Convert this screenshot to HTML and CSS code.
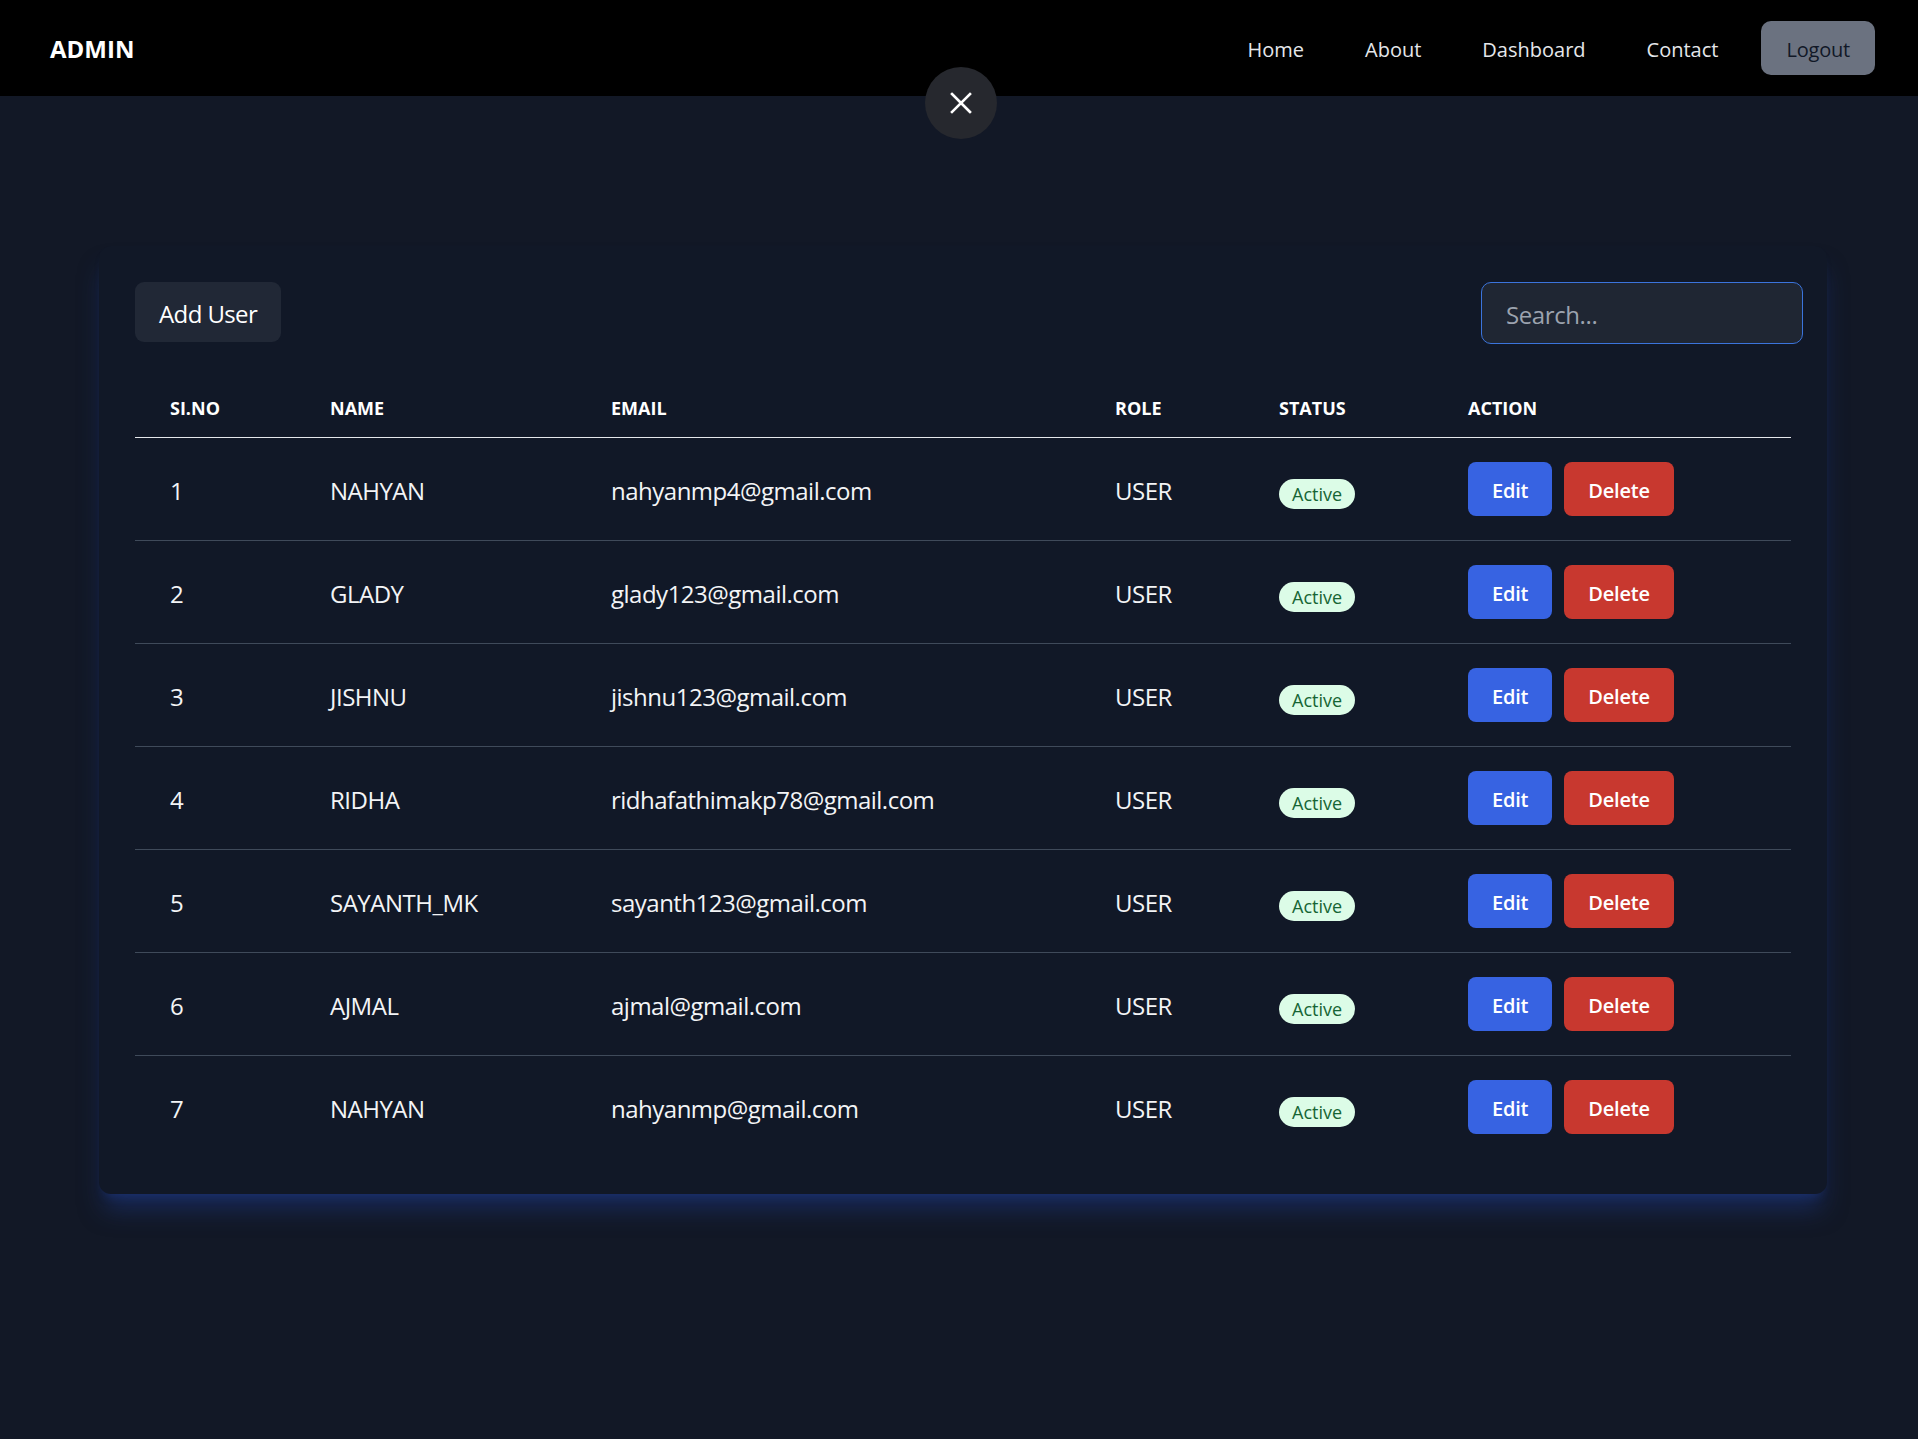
FILE: index.html
```html
<!DOCTYPE html>
<html lang="en">
<head>
<meta charset="utf-8">
<title>Admin - Users</title>
<link rel="stylesheet" href="styles.css">
</head>
<body>
<nav class="navbar">
  <div class="brand">ADMIN</div>
  <div class="nav-right">
    <ul class="nav-links">
      <li><a href="#">Home</a></li>
      <li><a href="#">About</a></li>
      <li><a href="#">Dashboard</a></li>
      <li><a href="#">Contact</a></li>
    </ul>
    <button class="logout">Logout</button>
  </div>
</nav>
<button class="close-btn" aria-label="Close">
  <svg width="22" height="22" viewBox="0 0 22 22"><path d="M2 2 L20 20 M20 2 L2 20" stroke="#fff" stroke-width="2.6" stroke-linecap="square" fill="none"/></svg>
</button>
<main class="page">
  <section class="card">
    <div class="toolbar">
      <button class="add-btn">Add User</button>
      <input class="search" type="text" placeholder="Search...">
    </div>
    <table class="users">
      <colgroup>
        <col class="c-no"><col class="c-name"><col class="c-email"><col class="c-role"><col class="c-status"><col class="c-action">
      </colgroup>
      <thead>
        <tr><th>SI.NO</th><th>NAME</th><th>EMAIL</th><th>ROLE</th><th>STATUS</th><th>ACTION</th></tr>
      </thead>
      <tbody>
        <tr><td>1</td><td>NAHYAN</td><td>nahyanmp4@gmail.com</td><td>USER</td><td><span class="badge">Active</span></td><td class="actions"><button class="btn edit">Edit</button><button class="btn delete">Delete</button></td></tr>
        <tr><td>2</td><td>GLADY</td><td>glady123@gmail.com</td><td>USER</td><td><span class="badge">Active</span></td><td class="actions"><button class="btn edit">Edit</button><button class="btn delete">Delete</button></td></tr>
        <tr><td>3</td><td>JISHNU</td><td>jishnu123@gmail.com</td><td>USER</td><td><span class="badge">Active</span></td><td class="actions"><button class="btn edit">Edit</button><button class="btn delete">Delete</button></td></tr>
        <tr><td>4</td><td>RIDHA</td><td>ridhafathimakp78@gmail.com</td><td>USER</td><td><span class="badge">Active</span></td><td class="actions"><button class="btn edit">Edit</button><button class="btn delete">Delete</button></td></tr>
        <tr><td>5</td><td>SAYANTH_MK</td><td>sayanth123@gmail.com</td><td>USER</td><td><span class="badge">Active</span></td><td class="actions"><button class="btn edit">Edit</button><button class="btn delete">Delete</button></td></tr>
        <tr><td>6</td><td>AJMAL</td><td>ajmal@gmail.com</td><td>USER</td><td><span class="badge">Active</span></td><td class="actions"><button class="btn edit">Edit</button><button class="btn delete">Delete</button></td></tr>
        <tr><td>7</td><td>NAHYAN</td><td>nahyanmp@gmail.com</td><td>USER</td><td><span class="badge">Active</span></td><td class="actions"><button class="btn edit">Edit</button><button class="btn delete">Delete</button></td></tr>
      </tbody>
    </table>
  </section>
</main>
</body>
</html>
```
FILE: styles.css
```css
* { box-sizing: border-box; }
html, body {
  margin: 0;
  padding: 0;
  background: #121826;
  font-family: "Open Sans", "Noto Sans", sans-serif;
  color: #f3f4f6;
}
body { min-height: 1439px; }

.navbar {
  height: 96px;
  background: #000;
  display: flex;
  align-items: center;
  justify-content: space-between;
  padding: 0 43px 0 50px;
}
.brand {
  font-size: 24px;
  font-weight: 700;
  color: #fff;
  padding-top: 1px;
}
.nav-right {
  display: flex;
  align-items: center;
  gap: 43px;
}
.nav-links {
  list-style: none;
  margin: 0;
  padding: 2px 0 0;
  display: flex;
  gap: 61px;
}
.nav-links a {
  color: #e5e7eb;
  text-decoration: none;
  font-size: 20px;
}
.logout {
  height: 54px;
  padding: 2px 25px 0;
  border: 0;
  border-radius: 10px;
  background: #6b7280;
  color: #111827;
  font-family: inherit;
  font-size: 20px;
  letter-spacing: -0.2px;
}

.close-btn {
  position: absolute;
  left: 925px;
  top: 67px;
  width: 72px;
  height: 72px;
  border-radius: 50%;
  border: 0;
  background: #26282e;
  display: flex;
  align-items: center;
  justify-content: center;
  padding: 0;
}

.page {
  padding: 150px 91px 0 99px;
}
.card {
  background: #111827;
  border-radius: 12px;
  padding: 36px;
  box-shadow: 0 20px 25px -5px rgba(30, 58, 138, 0.5), 0 8px 10px -6px rgba(30, 58, 138, 0.5);
}
.toolbar {
  display: flex;
  justify-content: space-between;
  align-items: flex-start;
  margin-right: -12px;
}
.add-btn {
  height: 60px;
  padding: 2px 24px 0;
  border: 0;
  border-radius: 9px;
  background: #212836;
  color: #fff;
  font-family: inherit;
  font-size: 24px;
  letter-spacing: -0.6px;
}
.search {
  width: 322px;
  height: 62px;
  padding: 2px 24px 0;
  border: 1px solid #3b74dc;
  border-radius: 10px;
  background: #1f2633;
  color: #e5e7eb;
  font-family: inherit;
  font-size: 24px;
  letter-spacing: -0.4px;
  outline: none;
}
.search::placeholder { color: #9ca3af; }

.users {
  width: 100%;
  margin-top: 34px;
  border-collapse: collapse;
  table-layout: fixed;
}
.c-no { width: 160px; }
.c-name { width: 281px; }
.c-email { width: 504px; }
.c-role { width: 164px; }
.c-status { width: 189px; }
.c-action { width: 358px; }

.users th {
  text-align: left;
  padding: 17px 35px 15px;
  font-size: 18px;
  font-weight: 700;
  line-height: 27px;
  color: #fff;
  border-bottom: 1px solid #e5e7eb;
}
.users td {
  padding: 26px 35px 22px;
  font-size: 24px;
  line-height: 36px;
  letter-spacing: -0.5px;
  color: #f3f4f6;
  vertical-align: middle;
  border-bottom: 1px solid #3f4a5a;
  white-space: nowrap;
}
.users td.actions { padding: 24px 35px; letter-spacing: 0; }
.users tbody tr:last-child td { border-bottom: 0; }

.badge {
  display: inline-block;
  height: 30px;
  line-height: 30px;
  padding: 0 13px;
  border-radius: 999px;
  background: #dcfce7;
  color: #166534;
  font-size: 18px;
  letter-spacing: 0;
  vertical-align: middle;
}
.btn {
  height: 54px;
  padding: 2px 24px 0;
  border: 0;
  border-radius: 8px;
  color: #fff;
  font-family: inherit;
  font-size: 20px;
  font-weight: 600;
  letter-spacing: -0.2px;
  vertical-align: middle;
}
.btn.edit { background: #3763e2; margin-right: 12px; }
.btn.delete { background: #c8382f; }
```
